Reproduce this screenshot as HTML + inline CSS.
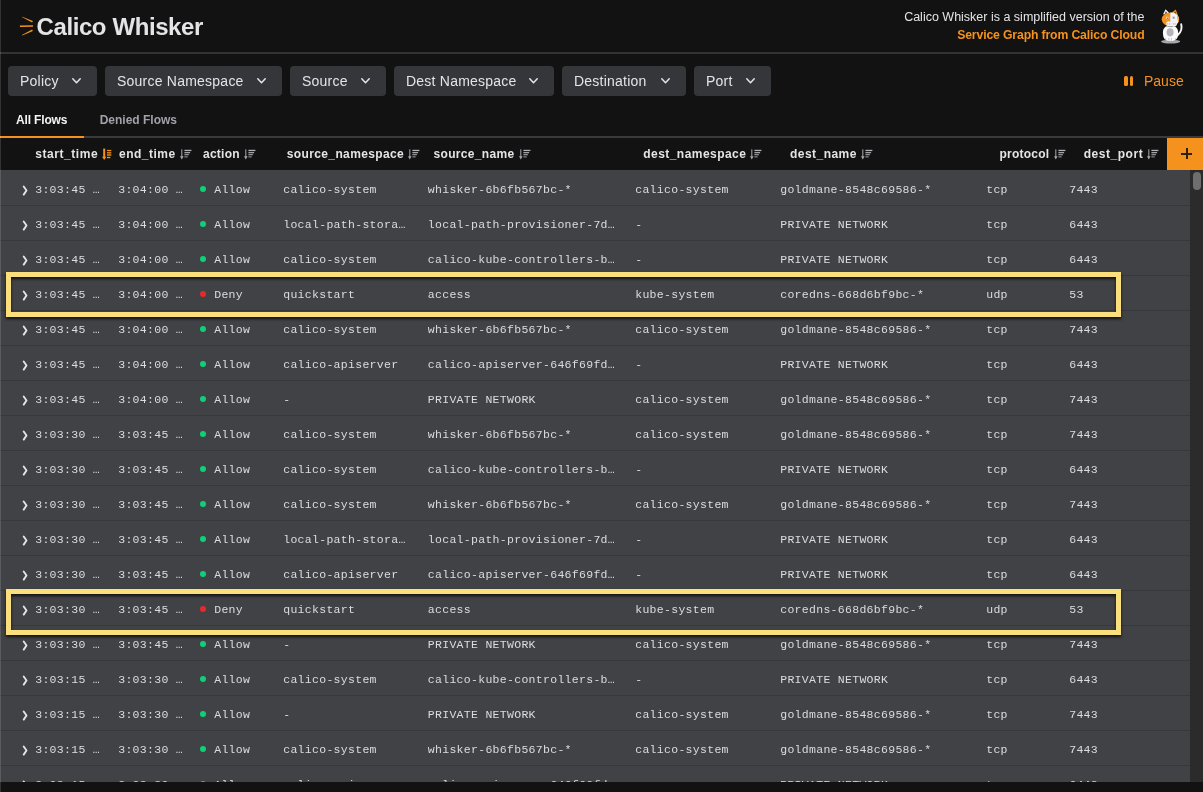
<!DOCTYPE html>
<html lang="en"><head><meta charset="utf-8"><title>Calico Whisker</title>
<style>
*{box-sizing:border-box;margin:0;padding:0}
html,body{width:1203px;height:792px;overflow:hidden;background:#121212}
body{position:relative;font-family:"Liberation Sans",sans-serif;color:#e4e4e7}
.abs{position:absolute}
.leftedge{position:absolute;left:0;top:0;width:1.2px;height:792px;background:rgba(255,255,255,.14);z-index:50}
.hdrline{position:absolute;left:0;top:52px;width:1203px;height:2px;background:#333335}
.title{position:absolute;left:36.5px;top:13px;font-size:24px;line-height:28px;font-weight:bold;color:#e4e4e7;white-space:nowrap;letter-spacing:-0.4px}
.logo{position:absolute;left:19px;top:16px;width:16px;height:20px}
.tag1{position:absolute;right:58.5px;top:9px;font-size:12.5px;line-height:16px;color:#e4e4e7;white-space:nowrap}
.tag2{position:absolute;right:58.5px;top:27px;letter-spacing:-0.15px;font-size:12.25px;line-height:16px;color:#f5921e;font-weight:bold;white-space:nowrap}
.cat{position:absolute;left:1155px;top:4px;width:36px;height:46px}
.fb{position:absolute;letter-spacing:0.23px;top:66px;height:30px;background:#35363a;border-radius:4px;font-size:14px;line-height:30px;color:#e4e4e7;padding-left:12px;white-space:nowrap}
.fb svg{position:absolute;right:16.3px;top:12px;width:9px;height:6px;fill:none;stroke:#e4e4e7;stroke-width:1.5;stroke-linecap:round;stroke-linejoin:round}
.pause{position:absolute;left:1144px;top:66px;font-size:14px;line-height:30px;color:#f5921e;white-space:nowrap}
.pausei{position:absolute;left:1124px;top:76px;width:9px;height:10px}
.pausei i{position:absolute;top:0;width:3.5px;height:10px;background:#f5921e;border-radius:1.5px}
.tab{position:absolute;top:112px;font-size:12px;line-height:16px;font-weight:bold;white-space:nowrap}
.tabline{position:absolute;left:0;top:136px;width:1203px;height:2px;background:#3a3a3c}
.tabsel{position:absolute;left:0;top:136px;width:84px;height:2px;background:#f5921e}
.thead{position:absolute;left:0;top:138px;width:1203px;height:32px;background:#121212}
.th{position:absolute;top:7.5px;font-size:12px;line-height:16px;font-weight:bold;color:#e4e4e7;white-space:nowrap}
.si{position:absolute;top:11px;width:12px;height:11px;overflow:visible}
.plus{position:absolute;left:1167px;top:138px;width:36px;height:32px;background:#f5921e}
.plus i{position:absolute;background:#2e200c}
.tbody{position:absolute;left:0;top:170px;width:1190px;height:612px;background:#414245;overflow:hidden}
.row{position:absolute;left:0;width:1190px;height:35px;border-bottom:1px solid #37383a;font-family:"Liberation Mono",monospace;font-size:11.5px;letter-spacing:0.3px;color:#dcdcdf}
.row .c{position:absolute;top:11px;line-height:16px;white-space:pre}
.exp{position:absolute;left:22px;top:13.6px;width:6px;height:11px;fill:none;stroke:#e4e4e6;stroke-width:1.9;stroke-linecap:round;stroke-linejoin:round}
.dot{position:absolute;left:199.8px;top:14.7px;width:6.4px;height:6.4px;border-radius:50%}
.dot.allow{background:#10cf7a}
.dot.deny{background:#e52a2d}
.hl{position:absolute;left:6px;width:1115.3px;height:45px;border:5.2px solid #fbdf7d;filter:drop-shadow(0.5px 2px 1.8px rgba(0,0,0,.75))}
.sbar{position:absolute;left:1190px;top:170px;width:13px;height:612px;background:#2b2b2c}
.sthumb{position:absolute;left:1193px;top:172px;width:8px;height:18px;background:#6e6e6f;border-radius:4px}
.wrap{position:absolute;left:0;top:0;width:1203px;height:792px;will-change:transform}

</style></head>
<body>
<div class="wrap">
<div class="leftedge"></div>
<svg class="logo" viewBox="0 0 16 20"><g fill="#f5921e"><path d="M2.9 1.0 L3.3 0.7 L13.9 4.9 L13.1 6.6 Z"/><path d="M0.9 9.5 L14 9.3 L14 10.8 L0.9 10.9 Z"/><path d="M2.9 19.1 L13.1 13.4 L13.9 15 L3.3 19.5 Z"/></g></svg>
<div class="title">Calico Whisker</div>
<div class="tag1">Calico Whisker is a simplified version of the</div>
<div class="tag2">Service Graph from Calico Cloud</div>
<svg class="cat" viewBox="0 0 36 46">
<ellipse cx="15.6" cy="37.6" rx="9.6" ry="1.9" fill="#a6a6ae"/>
<path d="M22.6 31.2 C25.6 28.6 27.3 24.4 26.2 20.2" fill="none" stroke="#f6f6f6" stroke-width="1.9" stroke-linecap="round"/>
<path d="M8 30 C7.6 25 9.5 21.5 15.5 21.5 C21.5 21.5 23.4 25 23.2 30 C23 34.5 21 37 15.5 37 C10 37 8.3 34.5 8 30 Z" fill="#fbfbfb"/>
<ellipse cx="15.1" cy="28.3" rx="3.5" ry="4.1" fill="#b4b4bc"/>
<path d="M8 10.6 L10.5 5.3 L14.1 8.8 Z" fill="#f6f6f6"/><path d="M9.9 10 L10.6 7.4 L12.4 8.9 Z" fill="#3a3a3e"/>
<path d="M17 8.6 L20.7 5.5 L22.9 11 Z" fill="#f5921e"/><path d="M19 9.3 L20.3 7.6 L21.2 9.9 Z" fill="#3a2a18"/>
<ellipse cx="15.4" cy="15.3" rx="8.7" ry="6.9" fill="#f5921e"/>
<path d="M15.5 8.5 C19 8.2 23.3 10.2 23.8 14.2 C24.2 18 22 21.4 18 22 L15 22.2 C15.8 18 14.8 12 15.5 8.5 Z" fill="#f3f3f5"/>
<path d="M21.9 11.6 C24 13 24.5 16.4 23.3 18.6 C22.4 16.4 22.6 13.8 21.9 11.6 Z" fill="#f5921e"/>
<circle cx="12.4" cy="14" r="1.3" fill="#ececf0"/><circle cx="12.7" cy="14.2" r="0.6" fill="#2e2f35"/>
<circle cx="18.6" cy="13.6" r="1.7" fill="#c4c4cc"/><circle cx="18.5" cy="13.6" r="1" fill="#f3f3f5"/><circle cx="18.7" cy="13.8" r="0.55" fill="#2e2f35"/>
<circle cx="13.7" cy="19.8" r="2.5" fill="#f3f3f5"/><circle cx="19.2" cy="19.8" r="2.7" fill="#f3f3f5"/>
<path d="M12.6 19 L12.8 20.8 M14.6 19 L14.4 20.8 M18.2 19 L18.4 20.8 M20.2 19 L20 20.8" stroke="#9a9aa2" stroke-width="0.5" fill="none"/>
<path d="M12.3 22.6 L18.2 22.6" stroke="#85858d" stroke-width="0.8"/>
<path d="M10.6 34 L10.8 36.6 M13.9 33.8 L13.9 36.8 M16.4 33.8 L16.4 36.8 M20.4 34 L20.2 36.6" stroke="#a2a2aa" stroke-width="0.6"/>
</svg>
<div class="hdrline"></div>

<div class="fb" style="left:8px;width:89px">Policy<svg viewBox="0 0 9 6"><path d="M0.8 0.8 L4.5 4.8 L8.2 0.8"/></svg></div>
<div class="fb" style="left:105px;width:177px">Source Namespace<svg viewBox="0 0 9 6"><path d="M0.8 0.8 L4.5 4.8 L8.2 0.8"/></svg></div>
<div class="fb" style="left:290px;width:96px">Source<svg viewBox="0 0 9 6"><path d="M0.8 0.8 L4.5 4.8 L8.2 0.8"/></svg></div>
<div class="fb" style="left:394px;width:160px">Dest Namespace<svg viewBox="0 0 9 6"><path d="M0.8 0.8 L4.5 4.8 L8.2 0.8"/></svg></div>
<div class="fb" style="left:562px;width:124px">Destination<svg viewBox="0 0 9 6"><path d="M0.8 0.8 L4.5 4.8 L8.2 0.8"/></svg></div>
<div class="fb" style="left:694px;width:77px">Port<svg viewBox="0 0 9 6"><path d="M0.8 0.8 L4.5 4.8 L8.2 0.8"/></svg></div>
<div class="pausei"><i style="left:0"></i><i style="left:5.7px"></i></div>
<div class="pause">Pause</div>

<div class="tab" style="left:16px;letter-spacing:-0.15px;color:#f4f4f5">All Flows</div>
<div class="tab" style="left:99.7px;color:#a1a1aa">Denied Flows</div>
<div class="tabline"></div><div class="tabsel"></div>

<div class="thead">
<span class="th" style="left:35.3px;letter-spacing:0.553px">start_time</span><svg class="si" viewBox="0 0 12 11" style="left:102.0px"><rect x="1.2" y="-0.4" width="2" height="9" fill="#f5921e"/><path d="M0.1 7.8 L4.3 7.8 L2.2 11 Z" fill="#f5921e"/><rect x="4.9" y="0.9" width="4.4" height="1.2" fill="#f5921e"/><rect x="4.9" y="2.9" width="4.4" height="1.7" fill="#cf7c1c"/><rect x="4.9" y="5.1" width="4.4" height="1.8" fill="#c4761b"/><rect x="4.9" y="7.8" width="3.4" height="1.4" fill="#f5921e"/></svg>
<span class="th" style="left:119px;letter-spacing:0.489px">end_time</span><svg class="si" viewBox="0 0 12 11" style="left:179.5px"><rect x="1.25" y="0.3" width="1.1" height="8.2" fill="#9c9ca1"/><path d="M0 7.3 L3.6 7.3 L1.8 10.4 Z" fill="#a6a6ab"/><rect x="4.4" y="0.8" width="7" height="1.3" fill="#b4b4b8"/><rect x="4.4" y="3" width="5.7" height="1.3" fill="#a2a2a7"/><rect x="4.4" y="5" width="4.5" height="1.3" fill="#8e8e93"/><rect x="4.4" y="7.2" width="3.3" height="1.3" fill="#7c7c82"/></svg>
<span class="th" style="left:203px;letter-spacing:0.26px">action</span><svg class="si" viewBox="0 0 12 11" style="left:244.0px"><rect x="1.25" y="0.3" width="1.1" height="8.2" fill="#9c9ca1"/><path d="M0 7.3 L3.6 7.3 L1.8 10.4 Z" fill="#a6a6ab"/><rect x="4.4" y="0.8" width="7" height="1.3" fill="#b4b4b8"/><rect x="4.4" y="3" width="5.7" height="1.3" fill="#a2a2a7"/><rect x="4.4" y="5" width="4.5" height="1.3" fill="#8e8e93"/><rect x="4.4" y="7.2" width="3.3" height="1.3" fill="#7c7c82"/></svg>
<span class="th" style="left:286.75px;letter-spacing:0.372px">source_namespace</span><svg class="si" viewBox="0 0 12 11" style="left:408.0px"><rect x="1.25" y="0.3" width="1.1" height="8.2" fill="#9c9ca1"/><path d="M0 7.3 L3.6 7.3 L1.8 10.4 Z" fill="#a6a6ab"/><rect x="4.4" y="0.8" width="7" height="1.3" fill="#b4b4b8"/><rect x="4.4" y="3" width="5.7" height="1.3" fill="#a2a2a7"/><rect x="4.4" y="5" width="4.5" height="1.3" fill="#8e8e93"/><rect x="4.4" y="7.2" width="3.3" height="1.3" fill="#7c7c82"/></svg>
<span class="th" style="left:433.5px;letter-spacing:0.328px">source_name</span><svg class="si" viewBox="0 0 12 11" style="left:518.5px"><rect x="1.25" y="0.3" width="1.1" height="8.2" fill="#9c9ca1"/><path d="M0 7.3 L3.6 7.3 L1.8 10.4 Z" fill="#a6a6ab"/><rect x="4.4" y="0.8" width="7" height="1.3" fill="#b4b4b8"/><rect x="4.4" y="3" width="5.7" height="1.3" fill="#a2a2a7"/><rect x="4.4" y="5" width="4.5" height="1.3" fill="#8e8e93"/><rect x="4.4" y="7.2" width="3.3" height="1.3" fill="#7c7c82"/></svg>
<span class="th" style="left:643.25px;letter-spacing:0.451px">dest_namespace</span><svg class="si" viewBox="0 0 12 11" style="left:750.0px"><rect x="1.25" y="0.3" width="1.1" height="8.2" fill="#9c9ca1"/><path d="M0 7.3 L3.6 7.3 L1.8 10.4 Z" fill="#a6a6ab"/><rect x="4.4" y="0.8" width="7" height="1.3" fill="#b4b4b8"/><rect x="4.4" y="3" width="5.7" height="1.3" fill="#a2a2a7"/><rect x="4.4" y="5" width="4.5" height="1.3" fill="#8e8e93"/><rect x="4.4" y="7.2" width="3.3" height="1.3" fill="#7c7c82"/></svg>
<span class="th" style="left:790px;letter-spacing:0.459px">dest_name</span><svg class="si" viewBox="0 0 12 11" style="left:860.75px"><rect x="1.25" y="0.3" width="1.1" height="8.2" fill="#9c9ca1"/><path d="M0 7.3 L3.6 7.3 L1.8 10.4 Z" fill="#a6a6ab"/><rect x="4.4" y="0.8" width="7" height="1.3" fill="#b4b4b8"/><rect x="4.4" y="3" width="5.7" height="1.3" fill="#a2a2a7"/><rect x="4.4" y="5" width="4.5" height="1.3" fill="#8e8e93"/><rect x="4.4" y="7.2" width="3.3" height="1.3" fill="#7c7c82"/></svg>
<span class="th" style="left:999.5px;letter-spacing:0.237px">protocol</span><svg class="si" viewBox="0 0 12 11" style="left:1053.5px"><rect x="1.25" y="0.3" width="1.1" height="8.2" fill="#9c9ca1"/><path d="M0 7.3 L3.6 7.3 L1.8 10.4 Z" fill="#a6a6ab"/><rect x="4.4" y="0.8" width="7" height="1.3" fill="#b4b4b8"/><rect x="4.4" y="3" width="5.7" height="1.3" fill="#a2a2a7"/><rect x="4.4" y="5" width="4.5" height="1.3" fill="#8e8e93"/><rect x="4.4" y="7.2" width="3.3" height="1.3" fill="#7c7c82"/></svg>
<span class="th" style="left:1083.75px;letter-spacing:0.526px">dest_port</span><svg class="si" viewBox="0 0 12 11" style="left:1147.0px"><rect x="1.25" y="0.3" width="1.1" height="8.2" fill="#9c9ca1"/><path d="M0 7.3 L3.6 7.3 L1.8 10.4 Z" fill="#a6a6ab"/><rect x="4.4" y="0.8" width="7" height="1.3" fill="#b4b4b8"/><rect x="4.4" y="3" width="5.7" height="1.3" fill="#a2a2a7"/><rect x="4.4" y="5" width="4.5" height="1.3" fill="#8e8e93"/><rect x="4.4" y="7.2" width="3.3" height="1.3" fill="#7c7c82"/></svg>
</div>
<div class="plus"><i style="left:14.3px;top:15.1px;width:11.2px;height:1.5px"></i><i style="left:19.15px;top:10.25px;width:1.5px;height:11.2px"></i></div>
<div class="tbody">
<div class="row" style="top:1px"><svg class="exp" viewBox="0 0 6 11"><path d="M1.7 1.5 L4.5 5.5 L1.7 9.6"/></svg><span class="c" style="left:35.2px">3:03:45 …</span><span class="c" style="left:118.2px">3:04:00 …</span><i class="dot allow"></i><span class="c" style="left:214.2px">Allow</span><span class="c" style="left:283.2px">calico-system</span><span class="c" style="left:427.8px">whisker-6b6fb567bc-*</span><span class="c" style="left:635.2px">calico-system</span><span class="c" style="left:780.2px">goldmane-8548c69586-*</span><span class="c" style="left:986.2px">tcp</span><span class="c" style="left:1069.2px">7443</span></div>
<div class="row" style="top:36px"><svg class="exp" viewBox="0 0 6 11"><path d="M1.7 1.5 L4.5 5.5 L1.7 9.6"/></svg><span class="c" style="left:35.2px">3:03:45 …</span><span class="c" style="left:118.2px">3:04:00 …</span><i class="dot allow"></i><span class="c" style="left:214.2px">Allow</span><span class="c" style="left:283.2px">local-path-stora…</span><span class="c" style="left:427.8px">local-path-provisioner-7d…</span><span class="c" style="left:635.2px">-</span><span class="c" style="left:780.2px">PRIVATE NETWORK</span><span class="c" style="left:986.2px">tcp</span><span class="c" style="left:1069.2px">6443</span></div>
<div class="row" style="top:71px"><svg class="exp" viewBox="0 0 6 11"><path d="M1.7 1.5 L4.5 5.5 L1.7 9.6"/></svg><span class="c" style="left:35.2px">3:03:45 …</span><span class="c" style="left:118.2px">3:04:00 …</span><i class="dot allow"></i><span class="c" style="left:214.2px">Allow</span><span class="c" style="left:283.2px">calico-system</span><span class="c" style="left:427.8px">calico-kube-controllers-b…</span><span class="c" style="left:635.2px">-</span><span class="c" style="left:780.2px">PRIVATE NETWORK</span><span class="c" style="left:986.2px">tcp</span><span class="c" style="left:1069.2px">6443</span></div>
<div class="row" style="top:106px"><svg class="exp" viewBox="0 0 6 11"><path d="M1.7 1.5 L4.5 5.5 L1.7 9.6"/></svg><span class="c" style="left:35.2px">3:03:45 …</span><span class="c" style="left:118.2px">3:04:00 …</span><i class="dot deny"></i><span class="c" style="left:214.2px">Deny</span><span class="c" style="left:283.2px">quickstart</span><span class="c" style="left:427.8px">access</span><span class="c" style="left:635.2px">kube-system</span><span class="c" style="left:780.2px">coredns-668d6bf9bc-*</span><span class="c" style="left:986.2px">udp</span><span class="c" style="left:1069.2px">53</span></div>
<div class="row" style="top:141px"><svg class="exp" viewBox="0 0 6 11"><path d="M1.7 1.5 L4.5 5.5 L1.7 9.6"/></svg><span class="c" style="left:35.2px">3:03:45 …</span><span class="c" style="left:118.2px">3:04:00 …</span><i class="dot allow"></i><span class="c" style="left:214.2px">Allow</span><span class="c" style="left:283.2px">calico-system</span><span class="c" style="left:427.8px">whisker-6b6fb567bc-*</span><span class="c" style="left:635.2px">calico-system</span><span class="c" style="left:780.2px">goldmane-8548c69586-*</span><span class="c" style="left:986.2px">tcp</span><span class="c" style="left:1069.2px">7443</span></div>
<div class="row" style="top:176px"><svg class="exp" viewBox="0 0 6 11"><path d="M1.7 1.5 L4.5 5.5 L1.7 9.6"/></svg><span class="c" style="left:35.2px">3:03:45 …</span><span class="c" style="left:118.2px">3:04:00 …</span><i class="dot allow"></i><span class="c" style="left:214.2px">Allow</span><span class="c" style="left:283.2px">calico-apiserver</span><span class="c" style="left:427.8px">calico-apiserver-646f69fd…</span><span class="c" style="left:635.2px">-</span><span class="c" style="left:780.2px">PRIVATE NETWORK</span><span class="c" style="left:986.2px">tcp</span><span class="c" style="left:1069.2px">6443</span></div>
<div class="row" style="top:211px"><svg class="exp" viewBox="0 0 6 11"><path d="M1.7 1.5 L4.5 5.5 L1.7 9.6"/></svg><span class="c" style="left:35.2px">3:03:45 …</span><span class="c" style="left:118.2px">3:04:00 …</span><i class="dot allow"></i><span class="c" style="left:214.2px">Allow</span><span class="c" style="left:283.2px">-</span><span class="c" style="left:427.8px">PRIVATE NETWORK</span><span class="c" style="left:635.2px">calico-system</span><span class="c" style="left:780.2px">goldmane-8548c69586-*</span><span class="c" style="left:986.2px">tcp</span><span class="c" style="left:1069.2px">7443</span></div>
<div class="row" style="top:246px"><svg class="exp" viewBox="0 0 6 11"><path d="M1.7 1.5 L4.5 5.5 L1.7 9.6"/></svg><span class="c" style="left:35.2px">3:03:30 …</span><span class="c" style="left:118.2px">3:03:45 …</span><i class="dot allow"></i><span class="c" style="left:214.2px">Allow</span><span class="c" style="left:283.2px">calico-system</span><span class="c" style="left:427.8px">whisker-6b6fb567bc-*</span><span class="c" style="left:635.2px">calico-system</span><span class="c" style="left:780.2px">goldmane-8548c69586-*</span><span class="c" style="left:986.2px">tcp</span><span class="c" style="left:1069.2px">7443</span></div>
<div class="row" style="top:281px"><svg class="exp" viewBox="0 0 6 11"><path d="M1.7 1.5 L4.5 5.5 L1.7 9.6"/></svg><span class="c" style="left:35.2px">3:03:30 …</span><span class="c" style="left:118.2px">3:03:45 …</span><i class="dot allow"></i><span class="c" style="left:214.2px">Allow</span><span class="c" style="left:283.2px">calico-system</span><span class="c" style="left:427.8px">calico-kube-controllers-b…</span><span class="c" style="left:635.2px">-</span><span class="c" style="left:780.2px">PRIVATE NETWORK</span><span class="c" style="left:986.2px">tcp</span><span class="c" style="left:1069.2px">6443</span></div>
<div class="row" style="top:316px"><svg class="exp" viewBox="0 0 6 11"><path d="M1.7 1.5 L4.5 5.5 L1.7 9.6"/></svg><span class="c" style="left:35.2px">3:03:30 …</span><span class="c" style="left:118.2px">3:03:45 …</span><i class="dot allow"></i><span class="c" style="left:214.2px">Allow</span><span class="c" style="left:283.2px">calico-system</span><span class="c" style="left:427.8px">whisker-6b6fb567bc-*</span><span class="c" style="left:635.2px">calico-system</span><span class="c" style="left:780.2px">goldmane-8548c69586-*</span><span class="c" style="left:986.2px">tcp</span><span class="c" style="left:1069.2px">7443</span></div>
<div class="row" style="top:351px"><svg class="exp" viewBox="0 0 6 11"><path d="M1.7 1.5 L4.5 5.5 L1.7 9.6"/></svg><span class="c" style="left:35.2px">3:03:30 …</span><span class="c" style="left:118.2px">3:03:45 …</span><i class="dot allow"></i><span class="c" style="left:214.2px">Allow</span><span class="c" style="left:283.2px">local-path-stora…</span><span class="c" style="left:427.8px">local-path-provisioner-7d…</span><span class="c" style="left:635.2px">-</span><span class="c" style="left:780.2px">PRIVATE NETWORK</span><span class="c" style="left:986.2px">tcp</span><span class="c" style="left:1069.2px">6443</span></div>
<div class="row" style="top:386px"><svg class="exp" viewBox="0 0 6 11"><path d="M1.7 1.5 L4.5 5.5 L1.7 9.6"/></svg><span class="c" style="left:35.2px">3:03:30 …</span><span class="c" style="left:118.2px">3:03:45 …</span><i class="dot allow"></i><span class="c" style="left:214.2px">Allow</span><span class="c" style="left:283.2px">calico-apiserver</span><span class="c" style="left:427.8px">calico-apiserver-646f69fd…</span><span class="c" style="left:635.2px">-</span><span class="c" style="left:780.2px">PRIVATE NETWORK</span><span class="c" style="left:986.2px">tcp</span><span class="c" style="left:1069.2px">6443</span></div>
<div class="row" style="top:421px"><svg class="exp" viewBox="0 0 6 11"><path d="M1.7 1.5 L4.5 5.5 L1.7 9.6"/></svg><span class="c" style="left:35.2px">3:03:30 …</span><span class="c" style="left:118.2px">3:03:45 …</span><i class="dot deny"></i><span class="c" style="left:214.2px">Deny</span><span class="c" style="left:283.2px">quickstart</span><span class="c" style="left:427.8px">access</span><span class="c" style="left:635.2px">kube-system</span><span class="c" style="left:780.2px">coredns-668d6bf9bc-*</span><span class="c" style="left:986.2px">udp</span><span class="c" style="left:1069.2px">53</span></div>
<div class="row" style="top:456px"><svg class="exp" viewBox="0 0 6 11"><path d="M1.7 1.5 L4.5 5.5 L1.7 9.6"/></svg><span class="c" style="left:35.2px">3:03:30 …</span><span class="c" style="left:118.2px">3:03:45 …</span><i class="dot allow"></i><span class="c" style="left:214.2px">Allow</span><span class="c" style="left:283.2px">-</span><span class="c" style="left:427.8px">PRIVATE NETWORK</span><span class="c" style="left:635.2px">calico-system</span><span class="c" style="left:780.2px">goldmane-8548c69586-*</span><span class="c" style="left:986.2px">tcp</span><span class="c" style="left:1069.2px">7443</span></div>
<div class="row" style="top:491px"><svg class="exp" viewBox="0 0 6 11"><path d="M1.7 1.5 L4.5 5.5 L1.7 9.6"/></svg><span class="c" style="left:35.2px">3:03:15 …</span><span class="c" style="left:118.2px">3:03:30 …</span><i class="dot allow"></i><span class="c" style="left:214.2px">Allow</span><span class="c" style="left:283.2px">calico-system</span><span class="c" style="left:427.8px">calico-kube-controllers-b…</span><span class="c" style="left:635.2px">-</span><span class="c" style="left:780.2px">PRIVATE NETWORK</span><span class="c" style="left:986.2px">tcp</span><span class="c" style="left:1069.2px">6443</span></div>
<div class="row" style="top:526px"><svg class="exp" viewBox="0 0 6 11"><path d="M1.7 1.5 L4.5 5.5 L1.7 9.6"/></svg><span class="c" style="left:35.2px">3:03:15 …</span><span class="c" style="left:118.2px">3:03:30 …</span><i class="dot allow"></i><span class="c" style="left:214.2px">Allow</span><span class="c" style="left:283.2px">-</span><span class="c" style="left:427.8px">PRIVATE NETWORK</span><span class="c" style="left:635.2px">calico-system</span><span class="c" style="left:780.2px">goldmane-8548c69586-*</span><span class="c" style="left:986.2px">tcp</span><span class="c" style="left:1069.2px">7443</span></div>
<div class="row" style="top:561px"><svg class="exp" viewBox="0 0 6 11"><path d="M1.7 1.5 L4.5 5.5 L1.7 9.6"/></svg><span class="c" style="left:35.2px">3:03:15 …</span><span class="c" style="left:118.2px">3:03:30 …</span><i class="dot allow"></i><span class="c" style="left:214.2px">Allow</span><span class="c" style="left:283.2px">calico-system</span><span class="c" style="left:427.8px">whisker-6b6fb567bc-*</span><span class="c" style="left:635.2px">calico-system</span><span class="c" style="left:780.2px">goldmane-8548c69586-*</span><span class="c" style="left:986.2px">tcp</span><span class="c" style="left:1069.2px">7443</span></div>
<div class="row" style="top:596px"><svg class="exp" viewBox="0 0 6 11"><path d="M1.7 1.5 L4.5 5.5 L1.7 9.6"/></svg><span class="c" style="left:35.2px">3:03:15 …</span><span class="c" style="left:118.2px">3:03:30 …</span><i class="dot allow"></i><span class="c" style="left:214.2px">Allow</span><span class="c" style="left:283.2px">calico-apiserver</span><span class="c" style="left:427.8px">calico-apiserver-646f69fd…</span><span class="c" style="left:635.2px">-</span><span class="c" style="left:780.2px">PRIVATE NETWORK</span><span class="c" style="left:986.2px">tcp</span><span class="c" style="left:1069.2px">6443</span></div>
<div class="hl" style="top:102px"></div>
<div class="hl" style="top:419.2px;height:45.5px"></div>
</div>
<div class="sbar"></div><div class="sthumb"></div>
</div>
</body></html>
